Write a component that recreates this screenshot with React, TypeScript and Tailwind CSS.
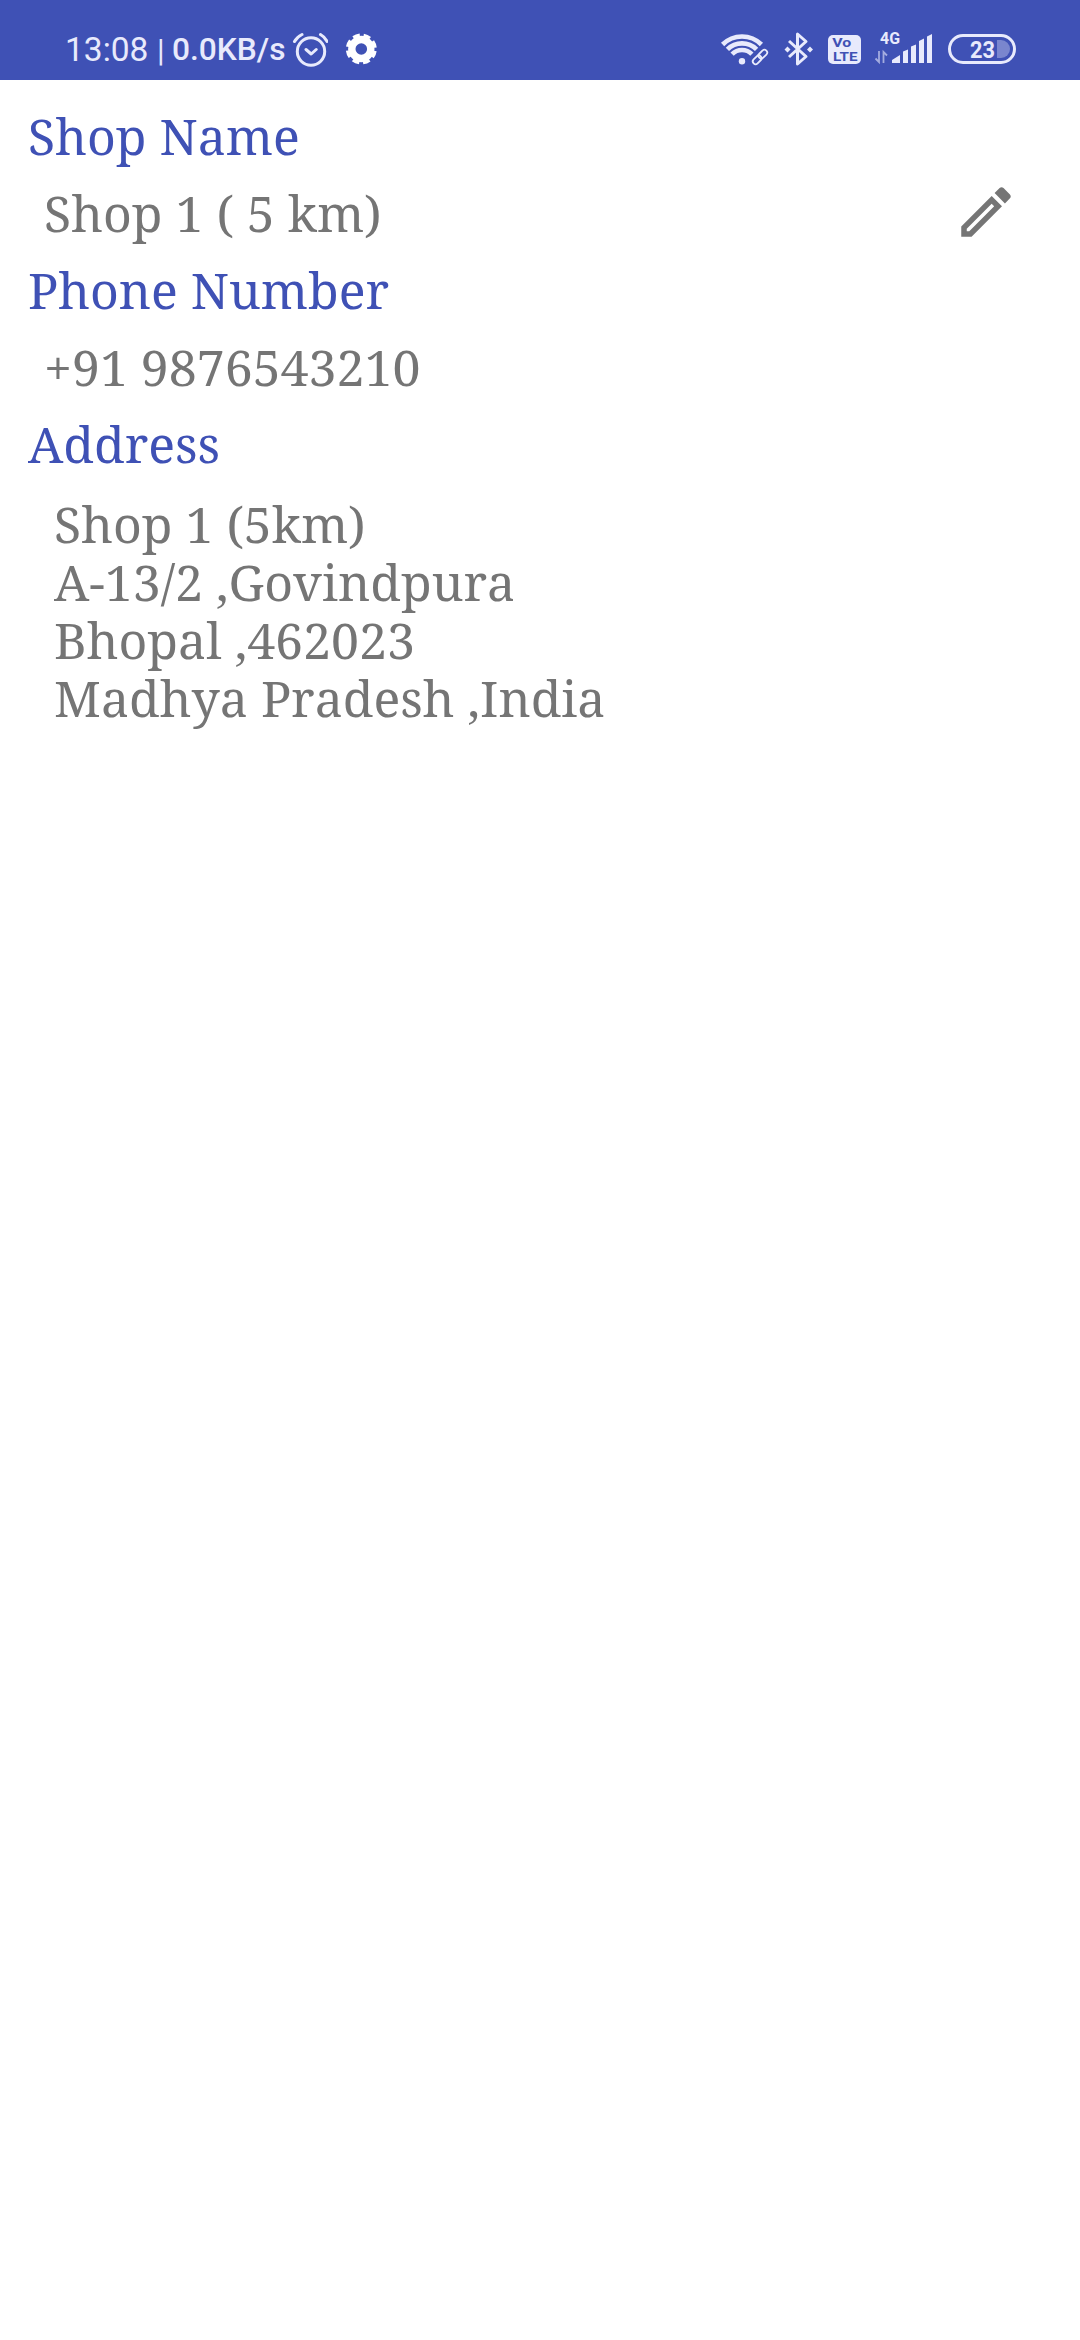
import React from "react";

function StatusBar() {
  return (
    <header className="flex h-20 w-full items-start bg-[#3f51b5] font-['Roboto',sans-serif] text-[#e8eafc]">
      <div className="flex h-20 w-[312px] shrink-0 items-start pl-[65px]">
        <span className="mt-[30px] w-[92px] whitespace-nowrap text-[33.500px] leading-10">13:08</span>
        <span className="mt-[31px] w-[15px] whitespace-nowrap text-[31px] leading-10">|</span>
        <span className="mt-[30px] whitespace-nowrap text-[31.700px] font-medium leading-10">0.0KB/s</span>
      </div>
      <svg className="-ml-[20px] mt-[31px] h-9 w-9 shrink-0" viewBox="292 31 36 36" fill="none" stroke="currentColor" strokeWidth="3" strokeLinecap="round" strokeLinejoin="round">
        <circle cx="311" cy="51.500" r="13.700" />
        <path d="M306 49.500l5.200 4.500 5-4.500M294.500 41.500Q297 37 302 34.500M320.500 34.500Q325 37 327 41.500" />
      </svg>
      <svg className="ml-[17px] mt-[33px] h-8 w-8 shrink-0" viewBox="345 33 32 32" fill="none" stroke="#ffffff">
        <circle cx="361.300" cy="49" r="9.500" strokeWidth="7.400" />
        <circle cx="361.300" cy="49" r="13.200" strokeWidth="4.600" strokeDasharray="6.600 3.767" strokeDashoffset="-1.880" />
      </svg>
      <svg className="ml-auto mr-[60px] mt-5 h-[60px] w-[310px] shrink-0" viewBox="710 20 310 60" fill="none" stroke="currentColor">
        <g strokeWidth="4.600">
          <path d="M722.600 44.500a27.500 27.500 0 0 1 38.800 0" />
          <path d="M727.400 49.400a20.700 20.700 0 0 1 29.200 0" />
          <path d="M732.100 54.100a14 14 0 0 1 19.800 0" />
          <circle cx="742" cy="61.200" r="3.200" fill="currentColor" stroke="none" />
        </g>
        <g strokeWidth="1.800" transform="rotate(-45 760 57)">
          <rect x="751" y="54.200" width="10" height="5.600" rx="2.800" />
          <rect x="759" y="54.200" width="10" height="5.600" rx="2.800" />
        </g>
        <path d="M789 41l17 15.500-8.500 7.500V34l8.500 7.500L789 57" strokeWidth="3" strokeLinejoin="round" />
        <path d="M787.500 46.500l3 3-3 3-3-3zM810 46.500l3 3-3 3-3-3z" fill="currentColor" stroke="none" />
        <rect x="828" y="35" width="33" height="29" rx="5" fill="currentColor" stroke="none" />
        <g stroke="none" fontFamily="Roboto, sans-serif" fontWeight="700">
          <text x="832.300" y="47.300" fontSize="13" fill="#3f51b5" textLength="19" lengthAdjust="spacingAndGlyphs">Vo</text>
          <text x="833" y="60.800" fontSize="13" fill="#3f51b5" textLength="24.500" lengthAdjust="spacingAndGlyphs">LTE</text>
          <text x="880" y="44" fontSize="16" fill="currentColor" textLength="20" lengthAdjust="spacingAndGlyphs">4G</text>
          <text x="970" y="58" fontSize="24" fill="currentColor" textLength="25" lengthAdjust="spacingAndGlyphs">23</text>
        </g>
        <path d="M879 51v11l-3.500-3.500M883.500 63V52l3.500 3.500" strokeWidth="1.800" opacity=".6" />
        <path d="M892 63v-3l8-5v8zM903 63V51.500l5-2V63zM911 63V46.500l5-2V63zM919 63V41l5-2.500V63zM927 63V36.500l5-2.500V63z" fill="currentColor" stroke="none" />
        <rect x="949.500" y="35.500" width="65" height="27" rx="13.500" strokeWidth="3" />
        <path d="M997 40h4a9 9 0 0 1 0 18h-4z" fill="currentColor" stroke="none" opacity=".35" />
      </svg>
    </header>
  );
}

function Label({ children }: { children: React.ReactNode }) {
  return <h2 className="h-[77px] whitespace-nowrap pl-7 leading-[77px] text-[#3f51b5]">{children}</h2>;
}

export default function App() {
  return (
    <div className="min-h-[2340px] w-[1080px] bg-white">
      <StatusBar />
      <main className="pt-[18px] font-['Noto_Serif','Droid_Serif',serif] text-[50px] text-[#757575] [font-kerning:none]">
        <Label>Shop Name</Label>
        <div className="flex h-[77px] items-center justify-between pl-11 pr-[61px] leading-[77px]">
          <span>Shop 1 ( 5 km)</span>
          <svg className="-mt-[3px] h-[66px] w-[66px]" viewBox="0 0 24 24" fill="currentColor">
            <path d="M14.060 9.020l.92.92L5.920 19H5v-.92l9.060-9.060M17.660 3c-.25 0-.51.1-.7.290l-1.830 1.830 3.750 3.750 1.830-1.830c.39-.39.39-1.020 0-1.410l-2.340-2.340c-.2-.2-.45-.29-.71-.29zm-3.600 3.190L3 17.250V21h3.750L17.810 9.940l-3.750-3.750z" />
          </svg>
        </div>
        <Label>Phone Number</Label>
        <p className="h-[77px] pl-11 leading-[77px]">+91 9876543210</p>
        <Label>Address</Label>
        <address className="pl-[54px] pt-3 not-italic leading-[58px]">
          <p>Shop 1 (5km)</p>
          <p>A-13/2 ,Govindpura</p>
          <p>Bhopal ,462023</p>
          <p>Madhya Pradesh ,India</p>
        </address>
      </main>
    </div>
  );
}
